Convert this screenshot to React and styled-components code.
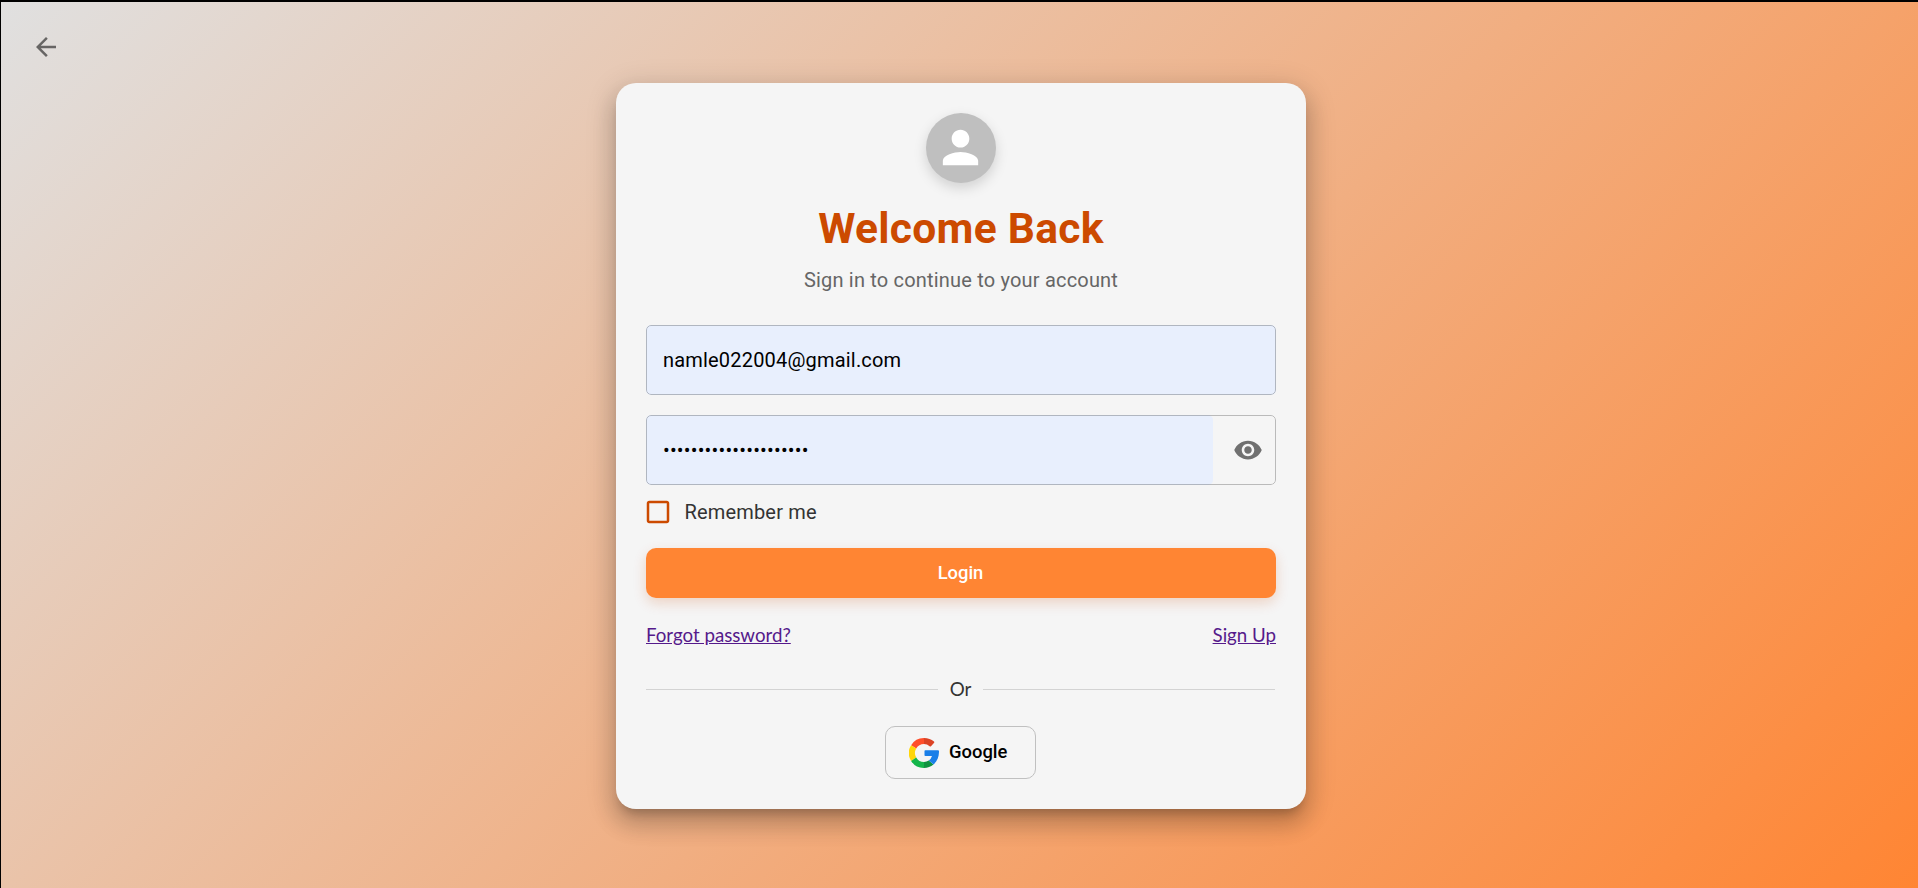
import React from 'react';
import styled, { createGlobalStyle } from 'styled-components';

const GlobalStyle = createGlobalStyle`
  * { box-sizing: border-box; }
  html, body { margin: 0; padding: 0; height: 100%; overflow: hidden; }
  body { font-family: Roboto, "Liberation Sans", sans-serif; background: #000; }
`;

const Frame = styled.div`
  height: 100vh;
  padding: 2px 0 0 1px;
  background: #000;
`;

const Page = styled.main`
  height: 100%;
  display: grid;
  grid-template-columns: 615px 690px 1fr;
  align-items: start;
  background: linear-gradient(135deg, #e0e0e0, #ff8533);
`;

const BackButton = styled.button`
  justify-self: start;
  display: flex;
  margin: 20px 0 0 20px;
  padding: 10px;
  border: 0;
  background: none;
  color: rgba(0, 0, 0, 0.54);
`;

const Icon = styled.svg`
  display: block;
  flex: none;
  width: ${({ $size }) => $size || 30}px;
  height: ${({ $size }) => $size || 30}px;
  fill: currentColor;
`;

const Card = styled.section`
  display: flex;
  flex-direction: column;
  align-items: center;
  width: 690px;
  height: 726px;
  margin-top: 81px;
  padding: 30px;
  border-radius: 20px;
  background: #f5f5f5;
  box-shadow:
    0 8.75px 10px -5px rgba(0, 0, 0, 0.2),
    0 15px 21.25px 2.5px rgba(0, 0, 0, 0.14),
    0 6.25px 27.5px 5px rgba(0, 0, 0, 0.12);
`;

const Avatar = styled.div`
  display: flex;
  align-items: center;
  justify-content: center;
  width: 70px;
  height: 70px;
  padding-right: 1px;
  border-radius: 50%;
  background: #bfbfbf;
  color: #fff;
  box-shadow: 0 5px 12.5px rgba(0, 0, 0, 0.15);
`;

const Title = styled.h1`
  margin: 20px 0 0;
  font-size: 42.5px;
  font-weight: 700;
  line-height: 52.5px;
  letter-spacing: 0.3125px;
  color: #cc4a00;
`;

const Subtitle = styled.p`
  margin: 10px 0 30px;
  font-size: 20px;
  line-height: 30px;
  letter-spacing: 0.1875px;
  color: #666;
`;

const Field = styled.div`
  position: relative;
  display: flex;
  align-items: center;
  width: 100%;
  height: 70px;
  margin-bottom: ${({ $gap }) => $gap}px;
  border-radius: 5px;
  overflow: hidden;
  color: #707070;

  &::after {
    content: "";
    position: absolute;
    inset: 0;
    border: 1px solid rgba(0, 0, 0, 0.24);
    border-radius: 5px;
    pointer-events: none;
  }
`;

const Input = styled.input`
  flex: 1;
  min-width: 0;
  height: 100%;
  padding: 0 17px 1px 17px;
  border: 0;
  outline: 0;
  border-radius: ${({ $rounded }) => ($rounded ? '0 5px 5px 0' : '0')};
  background: #e8effd;
  color: #000;
  font: 400 20px Roboto, sans-serif;
  letter-spacing: 0.1875px;
`;

const Adornment = styled.button`
  display: flex;
  padding: 0 13px 0 20px;
  border: 0;
  background: none;
  color: inherit;
`;

const Remember = styled.label`
  display: flex;
  align-items: center;
  align-self: flex-start;
  height: 33px;
  margin-left: -3px;
  gap: 11.5px;
  color: #cc4a00;
`;

const RememberText = styled.span`
  font-size: 20px;
  line-height: 30px;
  letter-spacing: 0.17px;
  color: #333;
`;

const LoginButton = styled.button`
  width: 100%;
  height: 50px;
  margin: 20px 0 0;
  padding: 0 1px 2px 0;
  border: 0;
  border-radius: 10px;
  background: #ff8533;
  color: #fff;
  font: 500 18.4px Roboto, sans-serif;
  box-shadow: 0 5px 12.5px rgba(204, 74, 0, 0.2);
`;

const Links = styled.nav`
  display: flex;
  justify-content: space-between;
  width: 100%;
  margin-top: 25px;
  font: 400 18.7px/24px Lato, sans-serif;
`;

const TextLink = styled.a`
  color: #551a8b;
  text-decoration: underline;
`;

const Divider = styled.div`
  display: flex;
  align-items: center;
  gap: 12px;
  width: 100%;
  height: 30px;
  margin-top: 27px;
  padding-right: 1px;
  color: #333;
  font: 400 18.75px/30px Lato, sans-serif;

  &::before, &::after {
    content: "";
    flex: 1;
    height: 1px;
    background: #d3d3d3;
  }
`;

const GoogleButton = styled.button`
  display: flex;
  align-items: center;
  gap: 10px;
  width: 151px;
  height: 53px;
  margin: 22px 1px 0 0;
  padding: 0 0 0 23px;
  border: 1px solid #c0c0c0;
  border-radius: 10px;
  background: none;
  color: #000;
  font: 500 18.4px Roboto, sans-serif;
`;

const GoogleLabel = styled.span`
  padding-bottom: 2px;
`;

const GoogleLogo = () => (
  <Icon viewBox="0 0 30 30" aria-hidden="true">
    <path fill="#ff4e2a" d="M2.1 7.2A15 15 0 0 1 15 0v6A9 9 0 0 0 7.2 10.5z" />
    <path fill="#db4325" d="M15 0c4 0 7.3 1.3 10 3.5.5.5.4 1-.1 1.6L22 8.2c-.4.4-.9.4-1.4 0A9 9 0 0 0 15 6z" />
    <path fill="#ffd60a" d="M2.1 7.2 7.2 10.5a9 9 0 0 0 0 9L2.1 23A15 15 0 0 1 2.1 7.2z" />
    <path fill="#14b54a" d="M2.1 22.9 7.2 19.5A9 9 0 0 0 15 24v6A15 15 0 0 1 2.1 22.9z" />
    <path fill="#0f9340" d="M15 24a9 9 0 0 0 4.8-1.4l4.7 3.9A15 15 0 0 1 15 30z" />
    <path fill="#1a7fe8" d="M16.3 12.2H29a1 1 0 0 1 1 1c.1 5.4-1.8 10-5.4 13.2L19.8 22.6A9 9 0 0 0 23 18h-6.7a.8.8 0 0 1-.8-.8V13a.8.8 0 0 1 .8-.8z" />
  </Icon>
);

export default function App() {
  return (
    <Frame>
      <GlobalStyle />
      <Page>
        <BackButton aria-label="Back">
          <Icon viewBox="0 0 24 24"><path d="M20 11H7.83l5.59-5.59L12 4l-8 8 8 8 1.41-1.41L7.83 13H20z" /></Icon>
        </BackButton>
        <Card>
          <Avatar>
            <Icon $size={53} viewBox="0 0 24 24"><path d="M12 12c2.21 0 4-1.79 4-4s-1.79-4-4-4-4 1.79-4 4 1.79 4 4 4m0 2c-2.67 0-8 1.34-8 4v2h16v-2c0-2.66-5.33-4-8-4" /></Icon>
          </Avatar>
          <Title>Welcome Back</Title>
          <Subtitle>Sign in to continue to your account</Subtitle>
          <Field $gap={20}>
            <Input type="email" aria-label="Email" defaultValue="namle022004@gmail.com" />
          </Field>
          <Field $gap={10}>
            <Input $rounded type="password" aria-label="Password" defaultValue="aaaaaaaaaaaaaaaaaaaaa" />
            <Adornment aria-label="Show password">
              <Icon viewBox="0 0 24 24"><path d="M12 4.5C7 4.5 2.73 7.61 1 12c1.73 4.39 6 7.5 11 7.5s9.27-3.11 11-7.5c-1.73-4.39-6-7.5-11-7.5M12 17c-2.76 0-5-2.24-5-5s2.24-5 5-5 5 2.24 5 5-2.24 5-5 5m0-8c-1.66 0-3 1.34-3 3s1.34 3 3 3 3-1.34 3-3-1.34-3-3-3" /></Icon>
            </Adornment>
          </Field>
          <Remember>
            <Icon viewBox="0 0 24 24"><path d="M19 5v14H5V5zm0-2H5c-1.1 0-2 .9-2 2v14c0 1.1.9 2 2 2h14c1.1 0 2-.9 2-2V5c0-1.1-.9-2-2-2" /></Icon>
            <RememberText>Remember me</RememberText>
          </Remember>
          <LoginButton>Login</LoginButton>
          <Links>
            <TextLink href="#forgot">Forgot password?</TextLink>
            <TextLink href="#signup">Sign Up</TextLink>
          </Links>
          <Divider>Or</Divider>
          <GoogleButton>
            <GoogleLogo />
            <GoogleLabel>Google</GoogleLabel>
          </GoogleButton>
        </Card>
      </Page>
    </Frame>
  );
}
